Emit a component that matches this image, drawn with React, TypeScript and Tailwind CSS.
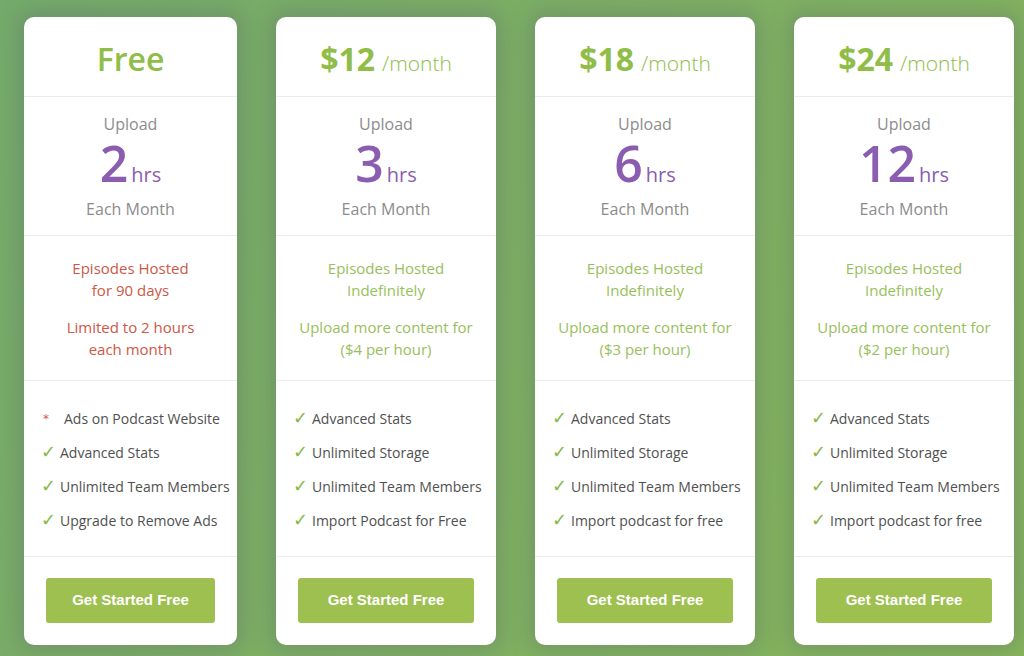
import React from 'react';

type Plan = {
  price: string;
  per?: string;
  hours: string;
  notes: string[][];
  limited: boolean;
  features: { text: string; ad?: boolean }[];
  wide: boolean;
};

const plans: Plan[] = [
  {
    price: 'Free',
    hours: '2',
    limited: true,
    notes: [['Episodes Hosted', 'for 90 days'], ['Limited to 2 hours', 'each month']],
    features: [
      { text: 'Ads on Podcast Website', ad: true },
      { text: 'Advanced Stats' },
      { text: 'Unlimited Team Members' },
      { text: 'Upgrade to Remove Ads' },
    ],
    wide: false,
  },
  {
    price: '$12',
    per: '/month',
    hours: '3',
    limited: false,
    notes: [['Episodes Hosted', 'Indefinitely'], ['Upload more content for', '($4 per hour)']],
    features: [
      { text: 'Advanced Stats' },
      { text: 'Unlimited Storage' },
      { text: 'Unlimited Team Members' },
      { text: 'Import Podcast for Free' },
    ],
    wide: true,
  },
  {
    price: '$18',
    per: '/month',
    hours: '6',
    limited: false,
    notes: [['Episodes Hosted', 'Indefinitely'], ['Upload more content for', '($3 per hour)']],
    features: [
      { text: 'Advanced Stats' },
      { text: 'Unlimited Storage' },
      { text: 'Unlimited Team Members' },
      { text: 'Import podcast for free' },
    ],
    wide: true,
  },
  {
    price: '$24',
    per: '/month',
    hours: '12',
    limited: false,
    notes: [['Episodes Hosted', 'Indefinitely'], ['Upload more content for', '($2 per hour)']],
    features: [
      { text: 'Advanced Stats' },
      { text: 'Unlimited Storage' },
      { text: 'Unlimited Team Members' },
      { text: 'Import podcast for free' },
    ],
    wide: true,
  },
];

function PlanCard({ plan }: { plan: Plan }) {
  return (
    <div
      className={`${plan.wide ? 'w-[220px]' : 'w-[213px]'} h-[628px] shrink-0 bg-white rounded-[10px] shadow-[0_0_20px_6px_rgba(85,95,105,0.3)] flex flex-col overflow-hidden`}
    >
      {/* Price */}
      <div className="h-[80px] pt-[4px] flex items-center justify-center border-b border-[#ececec] text-[#8fbd48]">
        {plan.per ? (
          <p className="flex items-baseline">
            <span className="text-[32px] font-bold leading-none">{plan.price}</span>
            <span className="text-[21px] font-light leading-none ml-[7px]">{plan.per}</span>
          </p>
        ) : (
          <p className="text-[32px] font-semibold leading-none">{plan.price}</p>
        )}
      </div>

      {/* Upload hours */}
      <div className="pt-4 pb-[15px] flex flex-col items-center border-b border-[#ececec]">
        <p className="text-[16px] leading-[22px] text-[#8c8c8c]">Upload</p>
        <p className="mt-[3px] h-[50px] flex items-baseline text-[#8a5db0]">
          <span className="text-[50px] leading-[50px] font-semibold">{plan.hours}</span>
          <span className="text-[20px] leading-none ml-[3px]">hrs</span>
        </p>
        <p className="mt-[10px] text-[16px] leading-[22px] text-[#8c8c8c]">Each Month</p>
      </div>

      {/* Hosting notes */}
      <div
        className={`pt-[21px] pb-[20px] flex flex-col gap-[15px] items-center text-center text-[15px] leading-[22px] border-b border-[#ececec] ${plan.limited ? 'text-[#cc5846]' : 'text-[#98c05a]'}`}
      >
        {plan.notes.map((n, i) => (
          <p key={i}>
            {n[0]}
            <br />
            {n[1]}
          </p>
        ))}
      </div>

      {/* Features */}
      <ul className="pt-[20px] pb-[19px] pl-[17px] border-b border-[#ececec]">
        {plan.features.map(f => (
          <li key={f.text} className="h-[34px] flex items-center text-[14px] text-[#505050] whitespace-nowrap">
            {f.ad ? (
              <>
                <span className="w-[23px] pl-[2px] pt-[2px] text-[#d0605a] text-[12px] font-['DejaVu_Sans',sans-serif]">*</span>
                <span>{f.text}</span>
              </>
            ) : (
              <>
                <span className="w-[19px] text-[#86b846] text-[18px] leading-none font-['DejaVu_Sans',sans-serif]">✓</span>
                <span>{f.text}</span>
              </>
            )}
          </li>
        ))}
      </ul>

      {/* CTA */}
      <div className="px-[22px] pt-[21px] pb-[21px]">
        <button className="w-full h-[45px] rounded-[3px] bg-[#9dc050] text-white text-[15px] font-bold font-['Liberation_Sans',Arial,sans-serif]">
          Get Started Free
        </button>
      </div>
    </div>
  );
}

export default function App() {
  return (
    <div className="w-[1024px] h-[656px] overflow-hidden bg-[linear-gradient(120deg,#74aa6b_0%,#7daf64_45%,#86b55b_100%)] font-['Open_Sans',sans-serif]">
      <div className="flex gap-[39px] pl-[24px] pt-[17px]">
        {plans.map(p => (
          <PlanCard key={p.price} plan={p} />
        ))}
      </div>
    </div>
  );
}
